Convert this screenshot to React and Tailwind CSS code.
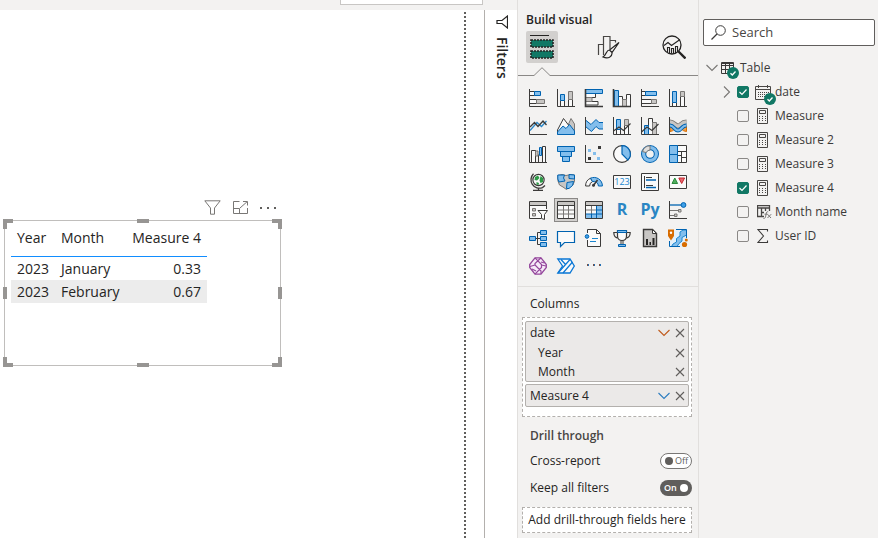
import { useState } from 'react';

const INK = '#3b3a39';
const BLUE = '#0063b1';
const SKY = '#83beec';
const GRAY = '#c8c6c4';
const EDGE = '#797775';
const PAPER = '#fafafa';

const axis = <path d="M.5 0V17.5H18" stroke={INK} />;

// 18x18 drawings, in the order of the gallery
const visuals = [
  {
    name: 'Stacked bar chart',
    art: (
      <>
        <path d="M.5 2.5H5.5V6.5H.5zM.5 10.5H7.5V14.5H.5z" stroke={INK} fill={PAPER} />
        <path d="M5.5 2.5H11.5V6.5H5.5z" stroke={BLUE} fill={SKY} />
        <path d="M7.5 10.5H15.5V14.5H7.5z" stroke={EDGE} fill={GRAY} />
        {axis}
      </>
    ),
  },
  {
    name: 'Stacked column chart',
    art: (
      <>
        <path d="M3.5 11.5H7.5V17.5H3.5zM11.5 10.5H15.5V17.5H11.5z" stroke={INK} fill={PAPER} />
        <path d="M3.5 5.5H7.5V11.5H3.5z" stroke={BLUE} fill={SKY} />
        <path d="M11.5 2.5H15.5V10.5H11.5z" stroke={EDGE} fill={GRAY} />
        {axis}
      </>
    ),
  },
  {
    name: 'Clustered bar chart',
    art: (
      <>
        <path d="M.5 4.5H10.5V8.5H.5zM.5 12.5H13V16H.5z" stroke={INK} fill={PAPER} />
        <path d="M.5 8.5H7V12.5H.5z" stroke={EDGE} fill={GRAY} />
        <path d="M.5 .5H17.5V4.5H.5z" stroke={BLUE} fill={SKY} />
        <path d="M.5 0V17.5H18" stroke={INK} strokeWidth="1.6" />
      </>
    ),
  },
  {
    name: 'Clustered column chart',
    art: (
      <>
        <path d="M5.5 7.5H9.5V17.5H5.5zM13.5 5.5H17.5V17.5H13.5z" stroke={INK} fill={PAPER} />
        <path d="M9.5 10.5H13.5V17.5H9.5z" stroke={EDGE} fill={GRAY} />
        <path d="M1.5 1.5H5.5V17.5H1.5z" stroke={BLUE} fill={SKY} />
        <path d="M.5 0V17.5H18" stroke={INK} strokeWidth="1.6" />
      </>
    ),
  },
  {
    name: '100% stacked bar chart',
    art: (
      <>
        <path d="M.5 2.5H4.5V6.5H.5zM.5 10.5H10.5V14.5H.5z" stroke={INK} fill={PAPER} />
        <path d="M4.5 2.5H15.5V6.5H4.5z" stroke={BLUE} fill={SKY} />
        <path d="M10.5 10.5H15.5V14.5H10.5z" stroke={EDGE} fill={GRAY} />
        {axis}
      </>
    ),
  },
  {
    name: '100% stacked column chart',
    art: (
      <>
        <path d="M3.5 13.5H7.5V17.5H3.5zM11.5 7.5H15.5V17.5H11.5z" stroke={INK} fill={PAPER} />
        <path d="M3.5 2.5H7.5V13.5H3.5z" stroke={BLUE} fill={SKY} />
        <path d="M11.5 2.5H15.5V7.5H11.5z" stroke={EDGE} fill={GRAY} />
        {axis}
      </>
    ),
  },
  {
    name: 'Line chart',
    art: (
      <>
        <path d="M1 13.5L8 5.5 12.5 9.5 17.5 4" stroke="#2b88c8" strokeWidth="1.3" />
        <path d="M1 10L5.5 5.5 9 9.5 14 4 17.5 8" stroke={INK} strokeWidth="1.3" />
        {axis}
      </>
    ),
  },
  {
    name: 'Area chart',
    art: (
      <>
        <path d="M8 15L14 1.5 17.5 7V17H8z" stroke={EDGE} fill={GRAY} />
        <path d="M.5 13L6.5 1.5 13 10V17H.5z" stroke={INK} fill={PAPER} />
        <path d="M.5 17.5V15L6 9 9 11.5 12.5 7.5 17.5 14V17.5z" stroke={BLUE} fill={SKY} />
      </>
    ),
  },
  {
    name: 'Stacked area chart',
    art: (
      <>
        <path d="M.5 3L6 7.5 11 2.5 14 5.5H18V12L14 12 11 9.5 6.5 14.5 .5 9.5z" fill={SKY} />
        <path d="M.5 3L6 7.5 11 2.5 14 5.5H18M.5 9.5L6.5 14.5 11 9.5 14 12H18" stroke={BLUE} />
        {axis}
      </>
    ),
  },
  {
    name: 'Line and stacked column chart',
    art: (
      <>
        <path d="M3.5 9.5H7.5V17.5H3.5zM11.5 8.5H15.5V17.5H11.5z" stroke={INK} fill={PAPER} />
        <path d="M3.5 2.5H7.5V12.5H3.5z" stroke={BLUE} fill={SKY} />
        <path d="M11.5 2.5H15.5V8.5H11.5z" stroke={EDGE} fill={GRAY} />
        <path d="M.5 14L6 10 10.5 13.5 17.5 6.5" stroke={INK} strokeWidth="1.2" />
        {axis}
      </>
    ),
  },
  {
    name: 'Line and clustered column chart',
    art: (
      <>
        <path d="M7.5 1.5H11.5V17.5H7.5z" stroke={INK} fill={PAPER} />
        <path d="M3.5 8.5H7.5V17.5H3.5z" stroke={BLUE} fill={SKY} />
        <path d="M11.5 5.5H15.5V17.5H11.5z" stroke={EDGE} fill={GRAY} />
        <path d="M.5 15L6 10 11 13.5 17.5 7" stroke={INK} strokeWidth="1.2" />
        {axis}
      </>
    ),
  },
  {
    name: 'Ribbon chart',
    art: (
      <>
        <path d="M1 8.5H17.5V14.5C13 14.5 12 10 9 10S5 14.5 1 14.5z" fill="#f0a04b" stroke="#d86c00" />
        <path d="M1 5C5 5 6 9 9 9S12 5 17.5 5" stroke={EDGE} strokeWidth="5" />
        <path d="M1 5C5 5 6 9 9 9S12 5 17.5 5" stroke={GRAY} strokeWidth="3.4" />
        <path d="M1 8.5C5 8.5 5.5 13.5 9 13.5S12.5 8.5 17.5 8.500" stroke={BLUE} strokeWidth="4" />
        <path d="M1 8.5C5 8.5 5.5 13.5 9 13.5S12.5 8.5 17.5 8.500" stroke={SKY} strokeWidth="2.2" />
        {axis}
      </>
    ),
  },
  {
    name: 'Waterfall chart',
    art: (
      <>
        <path d="M2.5 5.5H6.5V17.5H2.5zM13.5 1.5H16.5V17.5H13.5z" stroke={INK} fill={PAPER} />
        <path d="M6.5 5.5V17.5M9.5 9.5V17.5" stroke={INK} />
        <path d="M6.5 6H9V11H6.5z" fill={GRAY} stroke={EDGE} />
        <path d="M10.5 2.5H12.5V10.5H10.5z" stroke={BLUE} fill={SKY} />
        {axis}
      </>
    ),
  },
  {
    name: 'Funnel',
    art: <path d="M.5 1.5H17.5V6.5H.5zM3.5 6.5H14.5V11.5H3.5zM5.5 11.5H12.5V16.5H5.5z" stroke={BLUE} fill={SKY} />,
  },
  {
    name: 'Scatter chart',
    art: (
      <>
        <path d="M3 4H6V7H3zM8 7H11V10H8zM12 12H15V15H12z" fill={SKY} />
        <path d="M13 1H16V4H13zM3 12H6V15H3z" fill={INK} />
        {axis}
      </>
    ),
  },
  {
    name: 'Pie chart',
    art: (
      <>
        <circle cx="9" cy="9" r="8.4" stroke={INK} fill={PAPER} strokeWidth="1.2" />
        <path d="M9 .6A8.4 8.4 0 0 1 14.8 15L9 9z" stroke={BLUE} fill={SKY} strokeWidth="1.2" />
      </>
    ),
  },
  {
    name: 'Donut chart',
    art: (
      <>
        <circle cx="9" cy="9" r="6.4" stroke={BLUE} strokeWidth="5.2" />
        <circle cx="9" cy="9" r="6.4" stroke={SKY} strokeWidth="3.2" />
        <path d="M1.5 6.5A8 8 0 0 1 9 .8V5A4.2 4.2 0 0 0 5.2 7.6z" stroke={EDGE} fill="#e1dfdd" />
      </>
    ),
  },
  {
    name: 'Treemap',
    art: (
      <>
        <path d="M8.5 .5H17.5V17.5H8.5z" fill={PAPER} stroke={INK} />
        <path d="M8.5 6.5H17.5M8.5 10.5H12.5M12.5 6.5V17.5M12.5 12.5H17.5" stroke={INK} />
        <path d="M.5 .5H8.5V9.5H.5zM.5 9.5H8.5V17.5H.5z" fill={SKY} stroke={BLUE} />
      </>
    ),
  },
  {
    name: 'Map',
    art: (
      <>
        <circle cx="9.5" cy="7" r="5.6" fill={PAPER} stroke={INK} strokeWidth="1.2" />
        <path d="M6 4L9 2.5 10.5 5 8 7.5 5.5 7zM11.5 3L14 5V9L11.5 10 10.5 7.5zM7.5 9L10 10 9.5 12 7.5 11.5z" fill="#2d9a46" />
        <path d="M4.5 .8A8.4 8.4 0 0 0 13.5 14.6L16 12.5M9.5 15V17M4 17.3H14" stroke={INK} strokeWidth="1.3" />
      </>
    ),
  },
  {
    name: 'Filled map',
    art: (
      <>
        <path d="M.8 2.5L5 1.5 9 2.5 14 1.5 17.5 2V8L16 12 12 14.5 9.5 16.5 6 14 2.5 12 1 8z" fill={GRAY} stroke={EDGE} />
        <path d="M.8 2H7.5L6.5 5 8 8 2 9 .8 6z" fill={SKY} stroke={BLUE} />
        <path d="M12 1.5L17.5 2V6L12 5.5zM10 9.5L16.5 8.5 15.5 12.5 12 15.5H9.5z" fill={SKY} stroke={BLUE} />
      </>
    ),
  },
  {
    name: 'Gauge',
    art: (
      <>
        <path d="M.6 13A8.4 8.4 0 0 1 5.5 5.2L7.5 8.6A4.6 4.6 0 0 0 4.6 13z" fill={PAPER} stroke={INK} />
        <path d="M5.5 5.2A8.4 8.4 0 0 1 17.4 13H13.4A4.6 4.6 0 0 0 7.5 8.6z" fill={SKY} stroke={BLUE} />
        <path d="M8 13L12.5 7" stroke={INK} strokeWidth="1.6" />
        <circle cx="8.5" cy="12.3" r="1.5" fill={INK} />
      </>
    ),
  },
  {
    name: 'Card',
    art: (
      <>
        <path d="M.5 2.5H17.5V15.5H.5z" fill={PAPER} stroke={INK} />
        <text x="9" y="12" textAnchor="middle" fontSize="9" fill="#1a86d0">123</text>
      </>
    ),
  },
  {
    name: 'Multi-row card',
    art: (
      <>
        <path d="M.5 .5H17.5V17.5H.5z" fill={PAPER} stroke={INK} />
        <path d="M3.5 3V15" stroke={INK} />
        <path d="M5 4.5H11M5 12.5H12" stroke={INK} />
        <path d="M5 7H15M5 14.5H15" stroke={BLUE} strokeWidth="1.4" />
      </>
    ),
  },
  {
    name: 'KPI',
    art: (
      <>
        <path d="M.5 2.5H17.5V15.5H.5z" fill={PAPER} stroke={INK} />
        <path d="M3 10.5L5.8 5 8.6 10.5z" fill="#4fae5c" stroke="#2d8a3e" />
        <path d="M9.8 5H15.6L12.7 10.5z" fill="#e8686f" stroke="#c4262e" />
      </>
    ),
  },
  {
    name: 'Slicer',
    art: (
      <>
        <path d="M.5 .5H17.5V17.5H.5z" fill={PAPER} />
        <path d="M17.5 8V.5H.5V17.5H12" stroke={INK} />
        <path d="M1 1H17V4H1z" fill={GRAY} />
        <path d="M.5 4.5H17.5" stroke={INK} />
        <path d="M3.5 7.5H6.5V10H3.5zM3.5 12.5H6.5V15H3.5z" fill={GRAY} stroke={EDGE} />
        <path d="M9 9.5H18.5L15.5 13.5V18.5L12.5 17.5V13.5z" fill={PAPER} stroke={INK} />
      </>
    ),
  },
  {
    name: 'Table',
    art: (
      <>
        <path d="M.5 .5H17.5V17.5H.5z" fill={PAPER} />
        <path d="M1 1H17V4H1z" fill={GRAY} />
        <path d="M.5 9H17.5M.5 13H17.5M6.5 4.5V17.5M11.5 4.5V17.5" stroke={EDGE} />
        <path d="M.5 .5H17.5V17.5H.5zM.5 4.5H17.5" stroke={INK} />
      </>
    ),
  },
  {
    name: 'Matrix',
    art: (
      <>
        <path d="M.5 .5H17.5V17.5H.5z" fill={PAPER} />
        <path d="M1 1H17V4H1z" fill={GRAY} />
        <path d="M11.5 5H17V17H1V13H11.5z" fill={SKY} />
        <path d="M.5 9H11.5M6.5 4.5V13M11.5 4.5V13" stroke={EDGE} />
        <path d="M11.5 9H17M11.5 13V17M6.5 13V17M1 13H17M11.5 5V13" stroke={BLUE} />
        <path d="M.5 .5H17.5V17.5H.5zM.5 4.5H17.5" stroke={INK} />
      </>
    ),
  },
  { name: 'R script visual', label: 'R' },
  { name: 'Python visual', label: 'Py' },
  {
    name: 'Key influencers',
    art: (
      <>
        <path d="M.5 4H12" stroke={BLUE} strokeWidth="1.3" />
        <circle cx="14.5" cy="4" r="2.4" fill="#3fa0e8" stroke={BLUE} />
        <path d="M.5 9.5H9M.5 14.5H5" stroke={EDGE} />
        <path d="M9.5 8.5H12V11H9.5zM5.5 13H8V15.5H5.5z" fill={GRAY} stroke={EDGE} />
        {axis}
      </>
    ),
  },
  {
    name: 'Decomposition tree',
    art: (
      <>
        <path d="M6 9.5H11M8.5 3.5V15.5M8.5 3.5H11M8.5 15.5H11" stroke={INK} />
        <path d="M.5 7.5H6.5V11.5H.5zM11.5 1.5H17.5V5.5H11.5zM11.5 7.5H17.5V11.5H11.5zM11.5 13.5H17.5V17.5H11.5z" fill={SKY} stroke={BLUE} />
      </>
    ),
  },
  {
    name: 'Q&A',
    art: <path d="M.5 2.5H17.5V13.5H7.5L3.5 17.5V13.5H.5z" fill={PAPER} stroke={BLUE} strokeWidth="1.2" />,
  },
  {
    name: 'Smart narrative',
    art: (
      <>
        <path d="M2.5 4V.5H11.5L15.5 4.5V17.5H2.5V11" fill={PAPER} stroke={INK} />
        <path d="M11.5 .5V4.5H15.5" stroke={INK} />
        <path d="M7 9.5H13M5 12.5H11" stroke="#1a86d0" />
        <circle cx="2" cy="7.5" r="1.8" fill="#3fa0e8" stroke={BLUE} />
      </>
    ),
  },
  {
    name: 'Goals',
    art: (
      <>
        <path d="M4.5 3.5H.8C.8 7 2.5 9 5.5 9M13.5 3.5H17.2C17.2 7 15.5 9 12.5 9" stroke={INK} strokeWidth="1.2" />
        <path d="M4.5 1.5H13.5V7C13.5 10.5 11 11.5 9 11.5S4.5 10.5 4.5 7z" fill={PAPER} stroke={INK} strokeWidth="1.2" />
        <path d="M4.5 1.5H13.5V3.5H4.5z" fill={SKY} stroke={BLUE} />
        <path d="M8 11.5V15M10 11.5V15" stroke={INK} />
        <path d="M5.5 15.5H12.5V17.5H5.5z" fill={SKY} stroke={BLUE} />
      </>
    ),
  },
  {
    name: 'Paginated report',
    art: (
      <>
        <path d="M2.5 .5H11.5L15.5 4.5V17.5H2.5z" fill={GRAY} stroke={INK} strokeWidth="1.4" />
        <path d="M11.5 .5V4.5H15.5z" fill={PAPER} stroke={INK} />
        <path d="M5 10H7V16H5zM8.5 13H10V16H8.5zM11.5 9H13.5V16H11.5z" fill="#252423" />
      </>
    ),
  },
  {
    name: 'ArcGIS Maps',
    art: (
      <>
        <path d="M1 1.5H18V18H1z" fill="#e3f0fa" />
        <path d="M14 1H17.5V6L13 8.5V12L10 14.5 8 17.5H2.5L4 15 7.5 13V9.5L11 7V3z" fill={SKY} stroke="#1a86d0" />
        <path d="M7 .5H17.5V9M.5 12V17.5H11" stroke={BLUE} />
        <path d="M-1 .5H5V7L2 11.5 -1 7z" fill="#d86c00" />
        <circle cx="2" cy="3.8" r="1.2" fill="#fff" />
        <circle cx="15.5" cy="15.5" r="2.6" fill="#d86c00" />
        <circle cx="17.3" cy="11" r="1.5" fill="#d86c00" />
      </>
    ),
  },
  {
    name: 'Power Apps',
    art: (
      <>
        <path d="M6 .8H12L17.3 7.5V10.5L12 17.2H6L.7 10.500V7.500z" fill="#f6eaf8" stroke="#94479c" strokeWidth="1.3" />
        <path d="M6 .8L12.500 7.500V10.500L6 17.2M12 .8L6 6.500V8L12 14V17M12.500 8L17 9M6 8L1 9.500M12 5L15.500 6M7 14L3 12" stroke="#94479c" strokeWidth="1.2" />
      </>
    ),
  },
  {
    name: 'Power Automate',
    art: (
      <>
        <path d="M.8 2H13L17.3 9 13 16H.8L5.5 9z" fill={PAPER} stroke="#0a77d5" strokeWidth="1.3" />
        <path d="M1 16L13 2.500M6 16L15.500 5M4 2.500L8.500 7.500" stroke="#0a77d5" strokeWidth="1.2" />
      </>
    ),
  },
  {
    name: 'Get more visuals',
    art: (
      <>
        <path d="M2 7H4V9H2zM8 7H10V9H8zM14 7H16V9H14z" fill="#2672b5" />
        <path d="M2 7H3V9H2zM8 7H9V9H8zM14 7H15V9H14z" fill="#7a4e42" />
      </>
    ),
  },
];

const fields = [
  { name: 'Measure', icon: 'calc', checked: false },
  { name: 'Measure 2', icon: 'calc', checked: false },
  { name: 'Measure 3', icon: 'calc', checked: false },
  { name: 'Measure 4', icon: 'calc', checked: true },
  { name: 'Month name', icon: 'calcColumn', checked: false },
  { name: 'User ID', icon: 'sum', checked: false },
];

const rows = [
  { year: '2023', month: 'January', value: '0.33' },
  { year: '2023', month: 'February', value: '0.67' },
];

// positions of the eight resize grips on the frame
const grips = [
  '-left-0.5 -top-0.5 h-2.5 w-2.5 border-l-4 border-t-4',
  'left-1/2 -top-0.5 h-1 w-3 -translate-x-1/2 border-t-4',
  '-right-0.5 -top-0.5 h-2.5 w-2.5 border-r-4 border-t-4',
  '-left-0.5 top-1/2 h-3 w-1 -translate-y-1/2 border-l-4',
  '-right-0.5 top-1/2 h-3 w-1 -translate-y-1/2 border-r-4',
  '-left-0.5 -bottom-0.5 h-2.5 w-2.5 border-l-4 border-b-4',
  'left-1/2 -bottom-0.5 h-1 w-3 -translate-x-1/2 border-b-4',
  '-right-0.5 -bottom-0.5 h-2.5 w-2.5 border-r-4 border-b-4',
];

function Chevron({ color }) {
  return (
    <svg width="12" height="8" viewBox="0 0 12 8" fill="none" stroke={color}>
      <path d="M.5 1L6 6.5 11.5 1" strokeWidth="1.1" />
    </svg>
  );
}

function Cross() {
  return (
    <svg width="10" height="10" viewBox="0 0 10 10" fill="none" stroke="#605e5c">
      <path d="M1 1L9 9M9 1L1 9" strokeWidth="1.1" />
    </svg>
  );
}

function Badge() {
  return (
    <svg width="12" height="12" viewBox="0 0 12 12" fill="none" className="absolute -bottom-[5px] -right-[5px]">
      <circle cx="6" cy="6" r="6" fill="#117865" />
      <path d="M3.5 6.2L5.3 8 8.5 4.5" stroke="#fff" strokeWidth="1.3" />
    </svg>
  );
}

function FieldIcon({ type }) {
  if (type === 'calcColumn') {
    return (
      <svg width="15" height="14" viewBox="0 0 15 14" fill="none" stroke="#484644">
        <path d="M7 11.5H.5V.5H12.5V6M.5 3H12.5M4.5 3V11.5M8.5 3V6M4.5 7.5H7" strokeWidth="1.3" />
        <path d="M6.5 13.5C8.5 13.5 8.5 12 9 9.5S9.8 6.5 11.2 6.8M7.5 9.2H10.5M10.5 9.2L14 13M14.2 9.2L10.5 13" stroke="#797775" />
      </svg>
    );
  }
  if (type === 'sum') {
    return (
      <svg width="12" height="14" viewBox="0 0 12 14" fill="none" stroke="#3b3a39">
        <path d="M10.5 2.5V.5H1L6.5 7 1 13.5H10.5V11.5" strokeWidth="1.1" />
      </svg>
    );
  }
  return (
    <svg width="12" height="16" viewBox="0 0 12 16" fill="none" stroke="#484644">
      <path d="M.5 .5H10.5V15.5H.5zM2.5 2.5H8.5V5.5H2.5z" />
      <path d="M2 8.5H9M2 10.5H9M2 12.5H9" strokeDasharray="1 2" />
    </svg>
  );
}

function Checkbox({ label, checked, onChange }) {
  return (
    <span className="grid h-3 w-3 shrink-0">
      <input
        type="checkbox"
        aria-label={label}
        checked={checked}
        onChange={onChange}
        className="col-start-1 row-start-1 h-3 w-3 appearance-none rounded-[2px] border border-[#8a8886] checked:border-[#117865] checked:bg-[#117865]"
      />
      {checked && (
        <svg viewBox="0 0 12 12" fill="none" stroke="#fff" className="pointer-events-none col-start-1 row-start-1 h-3 w-3">
          <path d="M2.5 6L5 8.5 9.5 3.5" strokeWidth="1.2" />
        </svg>
      )}
    </span>
  );
}

function Toggle({ label, checked, onChange }) {
  return (
    <label className="flex items-center justify-between pl-2">
      <span>{label}</span>
      <input type="checkbox" role="switch" checked={checked} onChange={onChange} className="sr-only" />
      {checked ? (
        <span className="flex h-4 w-8 items-center justify-between rounded-full bg-[#605e5c] px-1 text-[9px] font-semibold text-white">
          On
          <span className="h-2 w-2 rounded-full bg-white" />
        </span>
      ) : (
        <span className="flex h-4 w-8 items-center justify-between rounded-full border border-[#797775] bg-white pl-1 pr-[3px] text-[9px] text-[#605e5c]">
          <span className="h-2 w-2 rounded-full bg-[#605e5c]" />
          Off
        </span>
      )}
    </label>
  );
}

function TableVisual() {
  return (
    <section className="w-[277px] max-w-full">
      <div className="flex h-[25px] items-center justify-end gap-3 pr-[5px]">
        <button aria-label="Filters on this visual">
          <svg width="17" height="15" viewBox="0 0 17 15" fill="none">
            <path d="M.8 .8H16.2L10.5 8V14.2H6.500V8z" fill="#fff" stroke="#797775" />
          </svg>
        </button>
        <button aria-label="Focus mode">
          <svg width="15" height="13" viewBox="0 0 15 13" fill="none" stroke="#797775">
            <path d="M6.5 .5H.5V12.5H14.5V7M.5 7.5H6.5V12.5M7 7L14 .8M10 .5H14.5V4.5" />
          </svg>
        </button>
        <button aria-label="More options">
          <svg width="16" height="4" viewBox="0 0 16 4" fill="#605e5c">
            <path d="M0 1H2V3H0zM7 1H9V3H7zM14 1H16V3H14z" />
          </svg>
        </button>
      </div>
      <div className="relative h-[146px] border border-[#c0bebc] px-1.5 pt-1.5">
        {grips.map((grip) => (
          <span key={grip} className={`absolute border-[#979593] ${grip}`} />
        ))}
        <table className="w-[196px] border-separate border-spacing-0 text-sm leading-[22px] text-[#252423]">
          <thead>
            <tr className="text-left">
              <th className="w-11 border-b border-[#118dff] pb-[7px] pl-1.5 font-normal">Year</th>
              <th className="border-b border-[#118dff] pb-[7px] pl-1.5 font-normal">Month</th>
              <th className="border-b border-[#118dff] pb-[7px] pr-1.5 text-right font-normal">Measure 4</th>
            </tr>
          </thead>
          <tbody>
            {rows.map((row) => (
              <tr key={row.month} className="h-[23px] even:bg-[#ececec]">
                <td className="pl-1.5">{row.year}</td>
                <td className="pl-1.5">{row.month}</td>
                <td className="pr-1.5 text-right">{row.value}</td>
              </tr>
            ))}
          </tbody>
        </table>
      </div>
    </section>
  );
}

function FiltersPane() {
  return (
    <aside className="flex w-[33px] shrink-0 flex-col items-center gap-2 border-l border-[#b3b0ad] bg-white pl-0.5 pt-[5px] text-[#252423]">
      <button aria-label="Expand filters">
        <svg width="12" height="14" viewBox="0 0 12 14" fill="none" stroke="#252423">
          <path d="M11.5 1V13L6 8.5H1V5.5H6z" strokeWidth="1.2" />
        </svg>
      </button>
      <h2 className="text-sm font-semibold [writing-mode:vertical-rl]">Filters</h2>
    </aside>
  );
}

function BuildPane() {
  const [selected, setSelected] = useState('Table');
  const [crossReport, setCrossReport] = useState(false);
  const [keepFilters, setKeepFilters] = useState(true);

  return (
    <aside className="flex w-[181px] shrink-0 flex-col border-l border-[#e1dfdd] text-xs text-[#252423]">
      <h2 className="px-2 pt-3 font-semibold">Build visual</h2>
      <div className="flex justify-between px-2 pt-[3px]">
        <button aria-label="Build visual" className="grid h-8 w-8 place-items-center rounded-[2px] bg-[#d2d0ce]">
          <svg width="24" height="26" viewBox="0 0 24 26" fill="none">
            <path d="M0 1.5H19" stroke="#252423" />
            <path d="M1 6H23V13H1zM1 17H23V24H1z" fill="#117865" stroke="#252423" strokeWidth="1.6" strokeDasharray="2 1" />
          </svg>
        </button>
        <button aria-label="Format visual" className="grid h-8 w-8 place-items-center">
          <svg width="23" height="24" viewBox="0 0 23 24" fill="none" stroke="#484644" strokeWidth="1.2">
            <path d="M1.5 20V9.5H6.5V20M6.5 9.5V1.5H13V14M13 5.5H18.5V7.500" />
            <path d="M22 7.5L12.500 15 15 17.500 22 7.5zM12.500 15C9 15 10 19.500 6 22 11 24 15.500 22 15 17.500" stroke="#252423" />
          </svg>
        </button>
        <button aria-label="Analytics" className="grid h-8 w-8 place-items-center">
          <svg width="24" height="24" viewBox="0 0 24 24" fill="none" stroke="#252423" strokeWidth="1.3">
            <circle cx="10" cy="10" r="9" />
            <path d="M2 10.5L6 7.5 9.5 10.5 18 4.5M5.5 17V12.5H7.5V18M9.5 18.5V13.5H11.5V18.5M13.5 18V11.5H15.5V17" strokeWidth="1.1" />
            <path d="M16.5 16.5L23.5 23.5" strokeWidth="2.4" />
          </svg>
        </button>
      </div>
      <div className="flex pt-1">
        <span className="w-4 border-b border-[#8a8886]" />
        <svg width="16" height="9" viewBox="0 0 16 9" fill="none" stroke="#8a8886">
          <path d="M0 8.5L8 .7 16 8.5" />
        </svg>
        <span className="flex-1 border-b border-[#8a8886]" />
      </div>

      <div className="grid grid-cols-[repeat(6,24px)] gap-1 border-b border-[#e1dfdd] px-2 pb-2 pt-2.5">
        {visuals.map((visual) => (
          <button
            key={visual.name}
            aria-label={visual.name}
            onClick={() => setSelected(visual.name)}
            className={`grid h-6 w-6 place-items-center ${
              visual.name === selected ? 'bg-[#d2d0ce] outline outline-1 -outline-offset-1 outline-[#8a8886]' : ''
            }`}
          >
            {visual.label ? (
              <span className="pb-0.5 text-base font-bold leading-none text-[#2a86c4]">{visual.label}</span>
            ) : (
              <svg width="18" height="18" viewBox="0 0 18 18" fill="none" className="overflow-visible">
                {visual.art}
              </svg>
            )}
          </button>
        ))}
      </div>

      <div className="flex flex-col pl-1 pr-1.5">
        <h3 className="pb-[5px] pl-2 pt-2 leading-[17px]">Columns</h3>
        <div className="flex flex-col gap-0.5 border border-dashed border-[#b3b0ad] bg-white px-0.5 pb-[9px] pt-[3px]">
          <div className="rounded-[2px] border border-[#b3b0ad] bg-[#ebe9e8] pl-1 pr-[3px]">
            <div className="flex h-[21px] items-center gap-[5px]">
              <span className="flex-1">date</span>
              <button aria-label="date options"><Chevron color="#c05a1c" /></button>
              <button aria-label="Remove date"><Cross /></button>
            </div>
            <div className="flex h-[19px] items-center pl-2">
              <span className="flex-1">Year</span>
              <button aria-label="Remove Year"><Cross /></button>
            </div>
            <div className="flex h-[19px] items-center pl-2">
              <span className="flex-1">Month</span>
              <button aria-label="Remove Month"><Cross /></button>
            </div>
          </div>
          <div className="flex h-[23px] items-center gap-[5px] rounded-[2px] border border-[#b3b0ad] bg-[#ebe9e8] pl-1 pr-[3px]">
            <span className="flex-1">Measure 4</span>
            <button aria-label="Measure 4 options"><Chevron color="#2b7cc0" /></button>
            <button aria-label="Remove Measure 4"><Cross /></button>
          </div>
        </div>

        <h3 className="pb-[9px] pl-2 pt-[11px] font-semibold text-[#484644]">Drill through</h3>
        <div className="flex flex-col gap-[11px]">
          <Toggle label="Cross-report" checked={crossReport} onChange={() => setCrossReport(!crossReport)} />
          <Toggle label="Keep all filters" checked={keepFilters} onChange={() => setKeepFilters(!keepFilters)} />
          <div className="flex h-[26px] items-center justify-center whitespace-nowrap border border-dashed border-[#b3b0ad] bg-white">
            Add drill-through fields here
          </div>
        </div>
      </div>
    </aside>
  );
}

function DataPane() {
  const [query, setQuery] = useState('');
  const [dateChecked, setDateChecked] = useState(true);
  const [items, setItems] = useState(fields);

  const toggle = (name) => {
    setItems(items.map((f) => (f.name === name ? { ...f, checked: !f.checked } : f)));
  };

  return (
    <aside className="w-[180px] shrink-0 border-l border-[#e1dfdd] pl-1 pr-[3px] pt-[19px] text-xs text-[#3b3a39]">
      <label className="flex h-[27px] items-center gap-1.5 rounded-[2px] border border-[#605e5c] bg-white px-[7px]">
        <svg width="15" height="15" viewBox="0 0 15 15" fill="none" stroke="#3b3a39" className="shrink-0">
          <circle cx="9.5" cy="5.5" r="4.8" />
          <path d="M6 9L.5 14.5" strokeWidth="1.2" />
        </svg>
        <input
          type="text"
          aria-label="Search"
          placeholder="Search"
          value={query}
          onChange={(e) => setQuery(e.target.value)}
          className="w-full min-w-0 text-[13px] placeholder-[#484644] focus:outline-none"
        />
      </label>

      <div className="mt-[10px] flex h-6 items-center pl-[3px]">
        <button aria-label="Collapse Table"><Chevron color="#797775" /></button>
        <span className="relative ml-[3px]">
          <svg width="13" height="12" viewBox="0 0 13 12" fill="none" stroke="#3b3a39">
            <path d="M.5 .5H12.5V11.5H.5zM.5 3.5H12.5M.5 7.5H12.5M4.5 .5V11.5M8.5 .5V11.5" />
            <path d="M0 1.5H13" />
          </svg>
          <Badge />
        </span>
        <span className="ml-1.5">Table</span>
      </div>

      <div className="flex h-6 items-center pl-5">
        <button aria-label="Expand date">
          <svg width="8" height="12" viewBox="0 0 8 12" fill="none" stroke="#797775">
            <path d="M1 .5L6.5 6 1 11.5" strokeWidth="1.1" />
          </svg>
        </button>
        <span className="ml-1.5 flex">
          <Checkbox label="date" checked={dateChecked} onChange={() => setDateChecked(!dateChecked)} />
        </span>
        <span className="relative ml-1.5">
          <svg width="16" height="15" viewBox="0 0 16 15" fill="none" stroke="#484644">
            <path d="M.5 1.5H15.5V14.5H.5zM.5 4.5H15.5M3.5 0V3M12.5 0V3" />
            <path d="M3 7.5H14M3 9.5H14M3 11.5H14" strokeDasharray="1 1" />
          </svg>
          <Badge />
        </span>
        <span className="ml-1">date</span>
      </div>

      {items
        .filter((f) => f.name.toLowerCase().includes(query.toLowerCase()))
        .map((f) => (
          <label key={f.name} className="flex h-6 items-center whitespace-nowrap pl-[34px]">
            <Checkbox label={f.name} checked={f.checked} onChange={() => toggle(f.name)} />
            <span className="ml-2 w-[18px] shrink-0">
              <FieldIcon type={f.icon} />
            </span>
            {f.name}
          </label>
        ))}
    </aside>
  );
}

export default function App() {
  return (
    <div className="flex h-screen overflow-hidden bg-[#f3f2f1] font-['Open_Sans','Noto_Sans',sans-serif]">
      <div className="flex min-w-0 flex-1 flex-col">
        <div className="flex h-2.5 shrink-0 justify-end pr-[34px]">
          <div className="h-[5px] w-[143px] border border-t-0 border-[#c8c6c4] bg-white" />
        </div>
        <div className="flex min-h-0 flex-1">
          <main className="min-w-0 flex-1 bg-white pl-1 pt-[185px]">
            <TableVisual />
          </main>
          <div className="w-0.5 shrink-0 bg-[repeating-linear-gradient(to_bottom,#fff_0_2px,#605e5c_2px_4px)]" />
          <div className="w-[18px] shrink-0 bg-white" />
          <FiltersPane />
        </div>
      </div>
      <BuildPane />
      <DataPane />
    </div>
  );
}
